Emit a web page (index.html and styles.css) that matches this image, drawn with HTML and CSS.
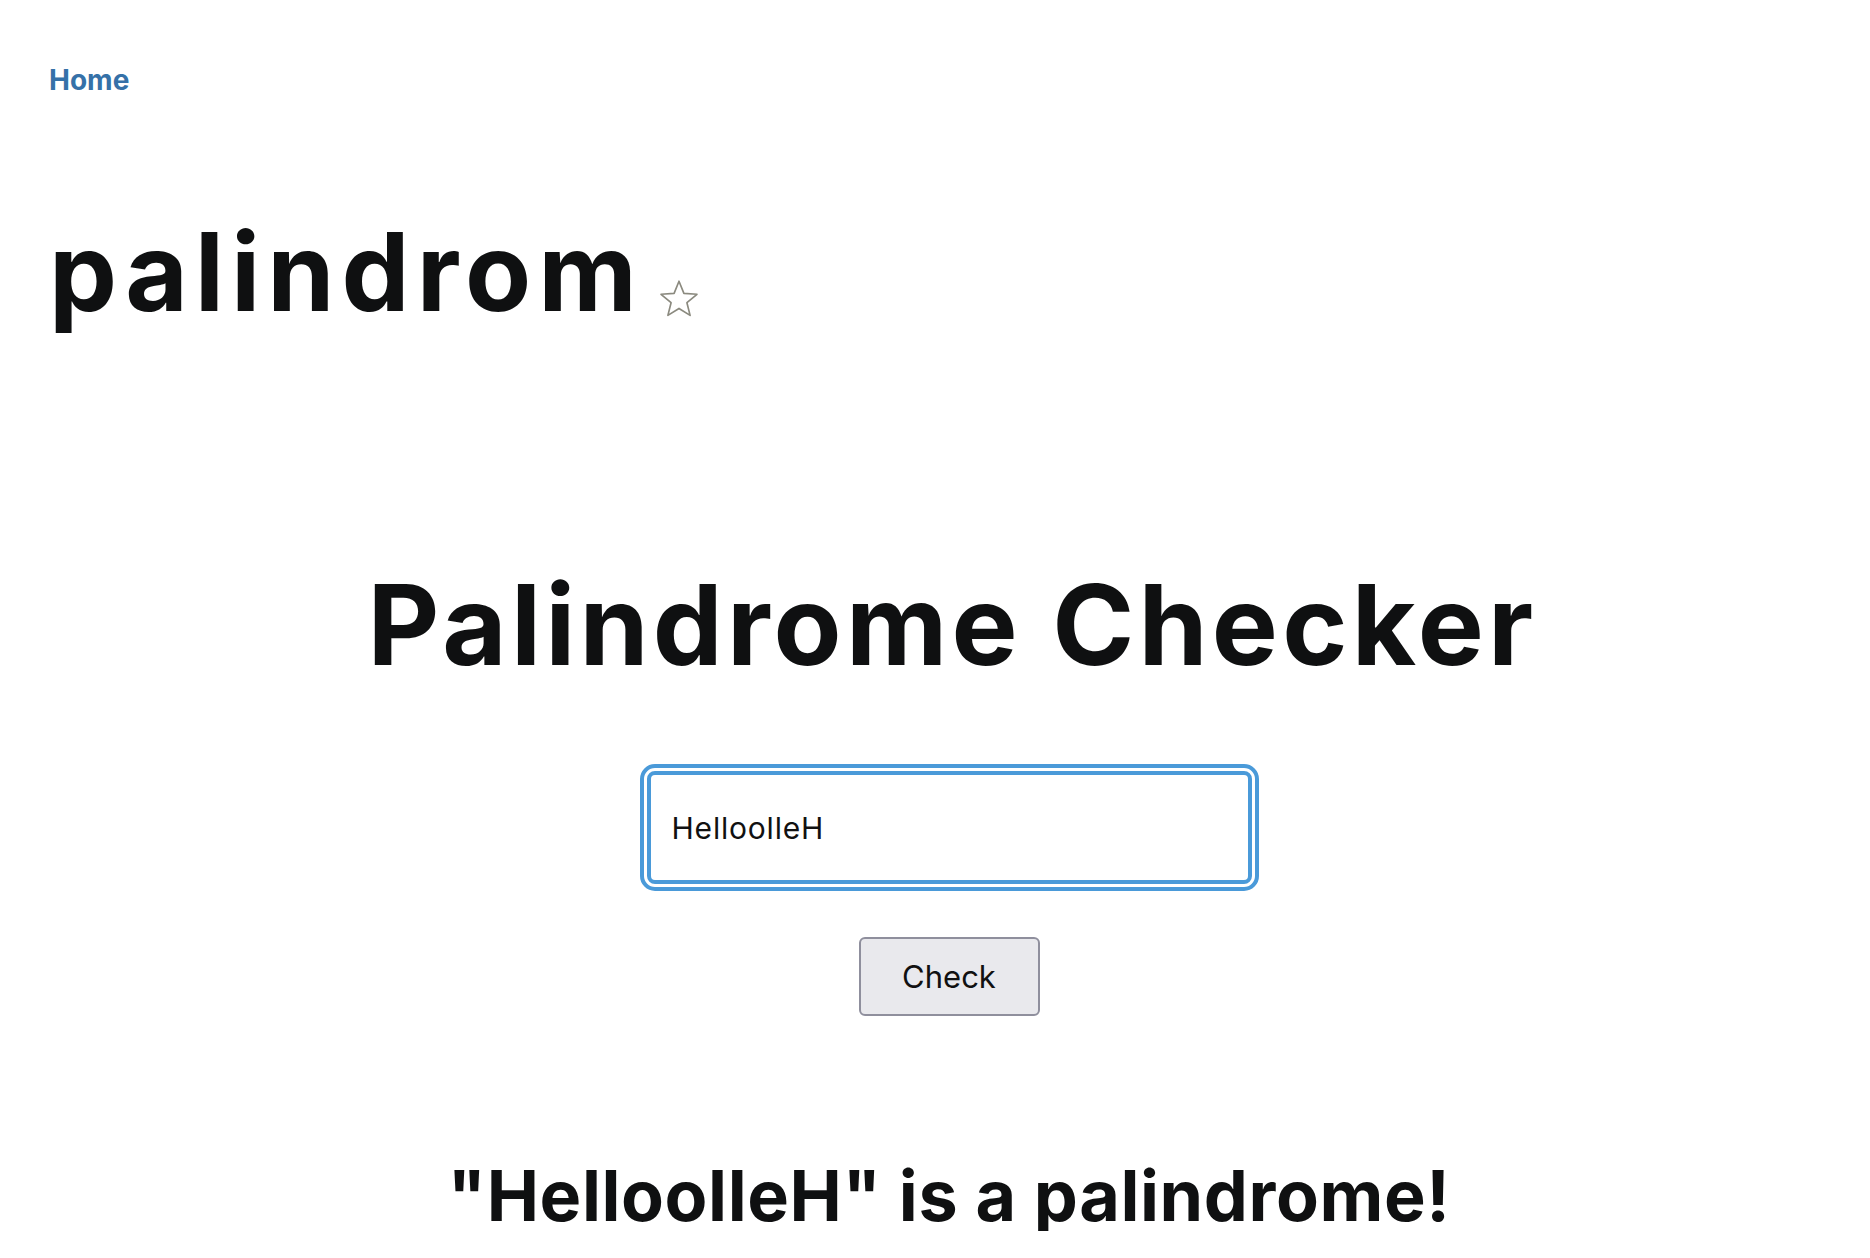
FILE: index.html
```html
<!DOCTYPE html>
<html lang="en">
<head>
<meta charset="utf-8">
<title>palindrom</title>
<link rel="stylesheet" href="styles.css">
</head>
<body>
  <nav class="nav">
    <a class="home" href="#">Home</a>
  </nav>
  <header class="title-row">
    <h1 class="site-title">palindrom</h1>
    <button class="star" aria-label="favorite">
      <svg width="40" height="40" viewBox="0 0 36 36">
        <path d="M18 2 L22.41 12.93 L34.17 13.75 L25.13 21.32 L27.99 32.75 L18 26.5 L8.01 32.75 L10.87 21.32 L1.83 13.75 L13.59 12.93 Z" fill="none" stroke="#8b8a7f" stroke-width="1.5" stroke-linejoin="round"/>
      </svg>
    </button>
  </header>
  <main class="checker">
    <h2 class="checker-title">Palindrome Checker</h2>
    <input class="word-input" type="text" value="HelloolleH">
    <button class="check-btn">Check</button>
    <h3 class="result">"HelloolleH" is a palindrome!</h3>
  </main>
</body>
</html>
```
FILE: styles.css
```css
html, body {
  margin: 0;
  padding: 0;
  background: #ffffff;
}
body {
  font-family: Inter, "Noto Sans", sans-serif;
  color: #0f1011;
}
.nav {
  padding: 66px 0 0 49px;
}
.home {
  display: inline-block;
  font-size: 28px;
  line-height: 1;
  font-weight: 700;
  color: #3571a8;
  text-decoration: none;
}
.title-row {
  display: flex;
  align-items: flex-end;
  gap: 15px;
  margin-top: 124px;
  padding-left: 49px;
}
.site-title {
  margin: 0;
  font-size: 108px;
  line-height: 1;
  font-weight: 700;
  letter-spacing: 7px;
}
.star {
  border: none;
  background: none;
  padding: 0;
  margin-bottom: 7px;
  width: 40px;
  height: 40px;
  display: flex;
}
.checker {
  display: flex;
  flex-direction: column;
  align-items: center;
  padding-left: 28px;
}
.checker-title {
  margin: 243px 0 0 7px;
  font-size: 111px;
  line-height: 1;
  font-weight: 700;
  letter-spacing: 4.2px;
}
.word-input {
  box-sizing: border-box;
  margin-top: 91px;
  width: 605px;
  height: 113px;
  border: 4px solid #4a9ad9;
  border-radius: 8px;
  outline: 4px solid #4a9ad9;
  outline-offset: 3px;
  padding: 0 21px;
  font-family: Inter, "Noto Sans", sans-serif;
  font-size: 30px;
  letter-spacing: 0.8px;
  color: #111;
  background: #fff;
}
.check-btn {
  box-sizing: border-box;
  margin-top: 53px;
  width: 181px;
  height: 79px;
  border: 2px solid #8f8f9d;
  border-radius: 6px;
  background: #e9e9ed;
  font-family: Inter, "Noto Sans", sans-serif;
  font-size: 31px;
  color: #111;
}
.result {
  margin: 145px 0 0;
  font-size: 70px;
  line-height: 1;
  font-weight: 700;
  letter-spacing: 0.6px;
}
```
